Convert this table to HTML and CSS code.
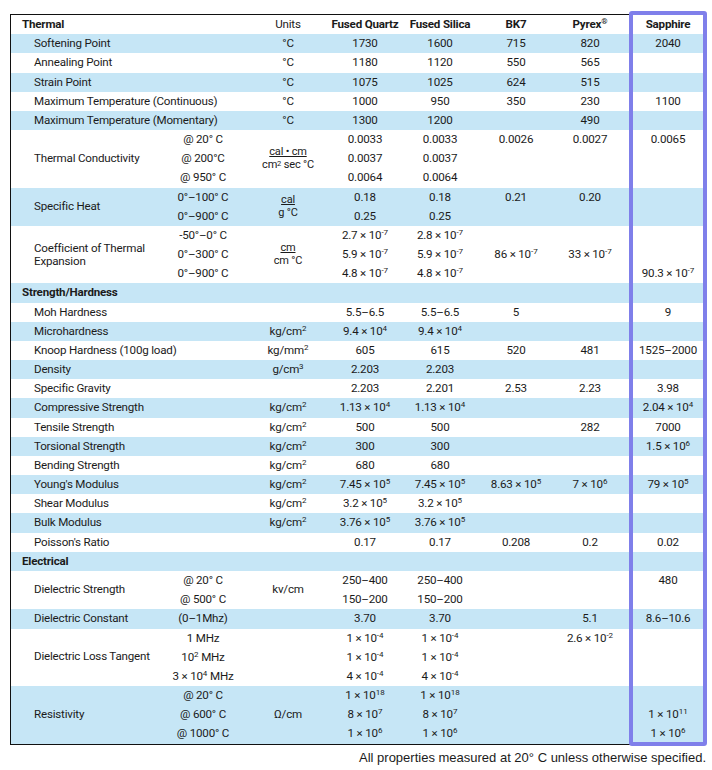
FILE: index.html
```html
<!DOCTYPE html>
<html lang="en">
<head>
<meta charset="utf-8">
<title>Material Properties</title>
<link rel="stylesheet" href="styles.css">
</head>
<body>
<div class="page">
  <div class="table">
    <div class="grp r1 hdr">
      <div class="c lab sec w2">Thermal</div>
      <div class="c">Units</div>
      <div class="c b">Fused Quartz</div>
      <div class="c b">Fused Silica</div>
      <div class="c b">BK7</div>
      <div class="c b">Pyrex<sup>®</sup></div>
      <div class="c b sapph-h">Sapphire</div>
    </div>

    <div class="grp r1 blue"><div class="c lab w2">Softening Point</div><div class="c">°C</div><div class="c">1730</div><div class="c">1600</div><div class="c">715</div><div class="c">820</div><div class="c">2040</div></div>
    <div class="grp r1"><div class="c lab w2">Annealing Point</div><div class="c">°C</div><div class="c">1180</div><div class="c">1120</div><div class="c">550</div><div class="c">565</div><div class="c"></div></div>
    <div class="grp r1 blue"><div class="c lab w2">Strain Point</div><div class="c">°C</div><div class="c">1075</div><div class="c">1025</div><div class="c">624</div><div class="c">515</div><div class="c"></div></div>
    <div class="grp r1"><div class="c lab w2">Maximum Temperature (Continuous)</div><div class="c">°C</div><div class="c">1000</div><div class="c">950</div><div class="c">350</div><div class="c">230</div><div class="c">1100</div></div>
    <div class="grp r1 blue"><div class="c lab w2">Maximum Temperature (Momentary)</div><div class="c">°C</div><div class="c">1300</div><div class="c">1200</div><div class="c"></div><div class="c">490</div><div class="c"></div></div>

    <div class="grp r3">
      <div class="c lab s3">Thermal Conductivity</div>
      <div class="c">@ 20° C</div><div class="c">@ 200°C</div><div class="c">@ 950° C</div>
      <div class="c s3"><div class="frac"><span class="num">cal • cm</span><span>cm<sup>2</sup> sec °C</span></div></div>
      <div class="c">0.0033</div><div class="c">0.0037</div><div class="c">0.0064</div>
      <div class="c">0.0033</div><div class="c">0.0037</div><div class="c">0.0064</div>
      <div class="c">0.0026</div><div class="c"></div><div class="c"></div>
      <div class="c">0.0027</div><div class="c"></div><div class="c"></div>
      <div class="c">0.0065</div><div class="c"></div><div class="c"></div>
    </div>

    <div class="grp r2 blue">
      <div class="c lab s2">Specific Heat</div>
      <div class="c">0°–100° C</div><div class="c">0°–900° C</div>
      <div class="c s2"><div class="frac"><span class="num">cal</span><span>g °C</span></div></div>
      <div class="c">0.18</div><div class="c">0.25</div>
      <div class="c">0.18</div><div class="c">0.25</div>
      <div class="c">0.21</div><div class="c"></div>
      <div class="c">0.20</div><div class="c"></div>
      <div class="c"></div><div class="c"></div>
    </div>

    <div class="grp r3">
      <div class="c lab s3 wrap">Coefficient of Thermal Expansion</div>
      <div class="c">-50°–0° C</div><div class="c">0°–300° C</div><div class="c">0°–900° C</div>
      <div class="c s3"><div class="frac"><span class="num">cm</span><span>cm °C</span></div></div>
      <div class="c">2.7 × 10<sup>-7</sup></div><div class="c">5.9 × 10<sup>-7</sup></div><div class="c">4.8 × 10<sup>-7</sup></div>
      <div class="c">2.8 × 10<sup>-7</sup></div><div class="c">5.9 × 10<sup>-7</sup></div><div class="c">4.8 × 10<sup>-7</sup></div>
      <div class="c"></div><div class="c">86 × 10<sup>-7</sup></div><div class="c"></div>
      <div class="c"></div><div class="c">33 × 10<sup>-7</sup></div><div class="c"></div>
      <div class="c"></div><div class="c"></div><div class="c">90.3 × 10<sup>-7</sup></div>
    </div>

    <div class="grp r1 blue"><div class="c lab sec full">Strength/Hardness</div></div>
    <div class="grp r1"><div class="c lab w2">Moh Hardness</div><div class="c"></div><div class="c">5.5–6.5</div><div class="c">5.5–6.5</div><div class="c">5</div><div class="c"></div><div class="c">9</div></div>
    <div class="grp r1 blue"><div class="c lab w2">Microhardness</div><div class="c">kg/cm<sup>2</sup></div><div class="c">9.4 × 10<sup>4</sup></div><div class="c">9.4 × 10<sup>4</sup></div><div class="c"></div><div class="c"></div><div class="c"></div></div>
    <div class="grp r1"><div class="c lab w2">Knoop Hardness (100g load)</div><div class="c">kg/mm<sup>2</sup></div><div class="c">605</div><div class="c">615</div><div class="c">520</div><div class="c">481</div><div class="c">1525–2000</div></div>
    <div class="grp r1 blue"><div class="c lab w2">Density</div><div class="c">g/cm<sup>3</sup></div><div class="c">2.203</div><div class="c">2.203</div><div class="c"></div><div class="c"></div><div class="c"></div></div>
    <div class="grp r1"><div class="c lab w2">Specific Gravity</div><div class="c"></div><div class="c">2.203</div><div class="c">2.201</div><div class="c">2.53</div><div class="c">2.23</div><div class="c">3.98</div></div>
    <div class="grp r1 blue"><div class="c lab w2">Compressive Strength</div><div class="c">kg/cm<sup>2</sup></div><div class="c">1.13 × 10<sup>4</sup></div><div class="c">1.13 × 10<sup>4</sup></div><div class="c"></div><div class="c"></div><div class="c">2.04 × 10<sup>4</sup></div></div>
    <div class="grp r1"><div class="c lab w2">Tensile Strength</div><div class="c">kg/cm<sup>2</sup></div><div class="c">500</div><div class="c">500</div><div class="c"></div><div class="c">282</div><div class="c">7000</div></div>
    <div class="grp r1 blue"><div class="c lab w2">Torsional Strength</div><div class="c">kg/cm<sup>2</sup></div><div class="c">300</div><div class="c">300</div><div class="c"></div><div class="c"></div><div class="c">1.5 × 10<sup>6</sup></div></div>
    <div class="grp r1"><div class="c lab w2">Bending Strength</div><div class="c">kg/cm<sup>2</sup></div><div class="c">680</div><div class="c">680</div><div class="c"></div><div class="c"></div><div class="c"></div></div>
    <div class="grp r1 blue"><div class="c lab w2">Young's Modulus</div><div class="c">kg/cm<sup>2</sup></div><div class="c">7.45 × 10<sup>5</sup></div><div class="c">7.45 × 10<sup>5</sup></div><div class="c">8.63 × 10<sup>5</sup></div><div class="c">7 × 10<sup>6</sup></div><div class="c">79 × 10<sup>5</sup></div></div>
    <div class="grp r1"><div class="c lab w2">Shear Modulus</div><div class="c">kg/cm<sup>2</sup></div><div class="c">3.2 × 10<sup>5</sup></div><div class="c">3.2 × 10<sup>5</sup></div><div class="c"></div><div class="c"></div><div class="c"></div></div>
    <div class="grp r1 blue"><div class="c lab w2">Bulk Modulus</div><div class="c">kg/cm<sup>2</sup></div><div class="c">3.76 × 10<sup>5</sup></div><div class="c">3.76 × 10<sup>5</sup></div><div class="c"></div><div class="c"></div><div class="c"></div></div>
    <div class="grp r1"><div class="c lab w2">Poisson's Ratio</div><div class="c"></div><div class="c">0.17</div><div class="c">0.17</div><div class="c">0.208</div><div class="c">0.2</div><div class="c">0.02</div></div>

    <div class="grp r1 blue"><div class="c lab sec full">Electrical</div></div>

    <div class="grp r2">
      <div class="c lab s2">Dielectric Strength</div>
      <div class="c">@ 20° C</div><div class="c">@ 500° C</div>
      <div class="c s2">kv/cm</div>
      <div class="c">250–400</div><div class="c">150–200</div>
      <div class="c">250–400</div><div class="c">150–200</div>
      <div class="c"></div><div class="c"></div>
      <div class="c"></div><div class="c"></div>
      <div class="c">480</div><div class="c"></div>
    </div>

    <div class="grp r1 blue"><div class="c lab">Dielectric Constant</div><div class="c">(0–1Mhz)</div><div class="c"></div><div class="c">3.70</div><div class="c">3.70</div><div class="c"></div><div class="c">5.1</div><div class="c">8.6–10.6</div></div>

    <div class="grp r3">
      <div class="c lab s3">Dielectric Loss Tangent</div>
      <div class="c">1 MHz</div><div class="c">10<sup>2</sup> MHz</div><div class="c">3 × 10<sup>4</sup> MHz</div>
      <div class="c s3"></div>
      <div class="c">1 × 10<sup>-4</sup></div><div class="c">1 × 10<sup>-4</sup></div><div class="c">4 × 10<sup>-4</sup></div>
      <div class="c">1 × 10<sup>-4</sup></div><div class="c">1 × 10<sup>-4</sup></div><div class="c">4 × 10<sup>-4</sup></div>
      <div class="c"></div><div class="c"></div><div class="c"></div>
      <div class="c">2.6 × 10<sup>-2</sup></div><div class="c"></div><div class="c"></div>
      <div class="c"></div><div class="c"></div><div class="c"></div>
    </div>

    <div class="grp r3 blue last">
      <div class="c lab s3">Resistivity</div>
      <div class="c">@ 20° C</div><div class="c">@ 600° C</div><div class="c">@ 1000° C</div>
      <div class="c s3">Ω/cm</div>
      <div class="c">1 × 10<sup>18</sup></div><div class="c">8 × 10<sup>7</sup></div><div class="c">1 × 10<sup>6</sup></div>
      <div class="c">1 × 10<sup>18</sup></div><div class="c">8 × 10<sup>7</sup></div><div class="c">1 × 10<sup>6</sup></div>
      <div class="c"></div><div class="c"></div><div class="c"></div>
      <div class="c"></div><div class="c"></div><div class="c"></div>
      <div class="c"></div><div class="c">1 × 10<sup>11</sup></div><div class="c">1 × 10<sup>6</sup></div>
    </div>
  </div>
  <div class="sapph-box"></div>
  <p class="note">All properties measured at 20° C unless otherwise specified.</p>
</div>
</body>
</html>
```

FILE: styles.css
```css
html, body {
  margin: 0;
  padding: 0;
  background: #ffffff;
}

.page {
  position: relative;
  width: 712px;
  padding-top: 14px;
  padding-left: 10px;
  box-sizing: border-box;
  font-family: Roboto, "Liberation Sans", Arial, sans-serif;
  font-size: 11.6px;
  letter-spacing: -0.2px;
  color: #1b1b1b;
}

.table {
  width: 693px;
  border-left: 1px solid #111;
  border-top: 1px solid #111;
  border-bottom: 1px solid #111;
  box-sizing: border-box;
}

.grp {
  display: grid;
  grid-template-columns: 154px 76px 94px 60px 90px 62px 86px 70px;
  grid-auto-flow: column;
  background: #ffffff;
}

.grp.blue {
  background: #c6e6f6;
}

.r1 { grid-template-rows: 19.18px; }
.r2 { grid-template-rows: repeat(2, 19.18px); }
.r3 { grid-template-rows: repeat(3, 19.18px); }

.c {
  display: block;
  justify-self: center;
  text-align: center;
  white-space: nowrap;
  line-height: 19.18px;
}

.lab {
  justify-self: stretch;
  text-align: left;
  padding-left: 23px;
}

.lab.sec {
  padding-left: 11px;
  font-weight: bold;
}

.b {
  font-weight: bold;
}

.w2 { grid-column: span 2; }
.full { grid-column: span 8; }

.s2, .s3 {
  display: flex;
  align-items: center;
  justify-content: center;
  line-height: 1.2;
}

.s2 { grid-row: span 2; }
.s3 { grid-row: span 3; }

.lab.s2, .lab.s3 {
  justify-content: flex-start;
}

.wrap {
  white-space: normal;
  line-height: 13px;
  padding-right: 6px;
}

.sapph-h {
  justify-self: stretch;
  margin-top: -1px;
  padding-top: 1px;
  background: #ffffff;
}

sup {
  font-size: 8px;
  line-height: 0;
  letter-spacing: 0;
  vertical-align: 4px;
}

.frac {
  display: flex;
  flex-direction: column;
  align-items: center;
  font-size: 11px;
  line-height: 12.5px;
}

.frac sup {
  font-size: 7.5px;
  vertical-align: 2px;
}

.num {
  text-decoration: underline;
  text-underline-offset: 1px;
}

.sapph-box {
  position: absolute;
  left: 629px;
  top: 11px;
  width: 78px;
  height: 735px;
  border: 4px solid #7f7fea;
  border-radius: 3px;
  box-sizing: border-box;
  pointer-events: none;
}

.note {
  margin: 5px 0 0 0;
  padding-right: 6px;
  text-align: right;
  font-family: "Liberation Sans", Arial, sans-serif;
  font-size: 13px;
  letter-spacing: 0;
  color: #1b1b1b;
}
```
